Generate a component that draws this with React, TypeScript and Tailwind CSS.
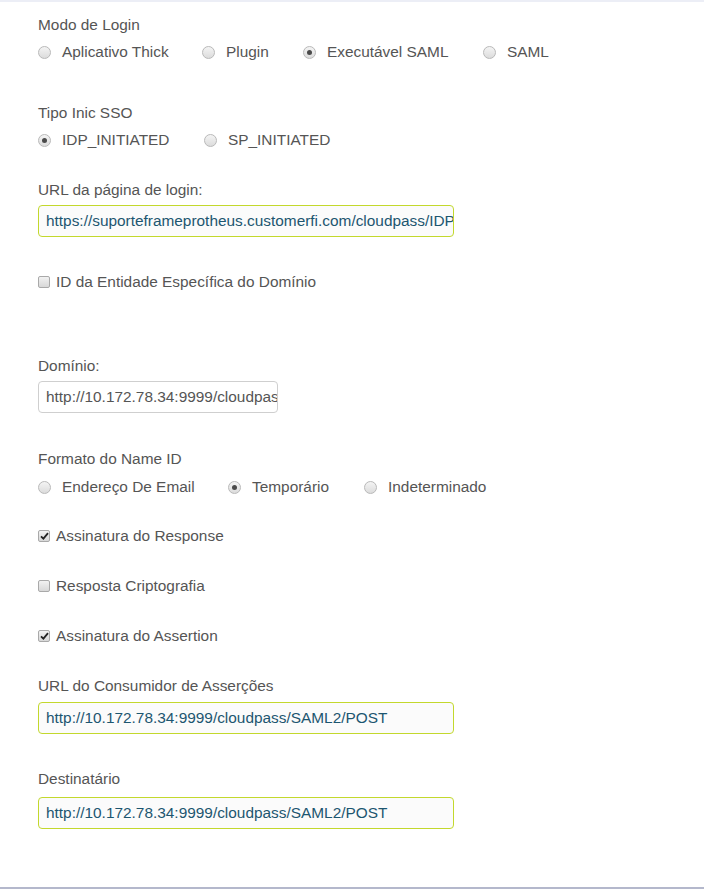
import React from "react";

const font = { fontFamily: '"Liberation Sans", Arial, sans-serif' };

function Radio({ checked }: { checked?: boolean }) {
  return (
    <span className="flex h-[13px] w-[13px] shrink-0 items-center justify-center rounded-full border border-[#b9b9b9] bg-gradient-to-b from-[#f4f4f4] to-[#dcdcdc]">
      {checked && <span className="h-[5px] w-[5px] rounded-full bg-[#4a4a4a]" />}
    </span>
  );
}

function Check({ checked }: { checked?: boolean }) {
  return (
    <span className="flex h-[12px] w-[12px] shrink-0 items-center justify-center rounded-[2px] border border-[#a9a9a9] bg-gradient-to-b from-[#f2f2f2] to-[#d8d8d8]">
      {checked && (
        <svg width="9" height="8" viewBox="0 0 9 8">
          <path d="M1 4.3 L3.4 6.6 L8 1.2" fill="none" stroke="#222" strokeWidth="1.8" />
        </svg>
      )}
    </span>
  );
}

function RadioGroup({ options, widths }: { options: { label: string; checked?: boolean }[]; widths: string[] }) {
  return (
    <div className="flex h-5 items-center">
      {options.map((o, i) => (
        <div key={o.label} className={`flex items-center ${widths[i]}`}>
          <Radio checked={o.checked} />
          <span className="ml-[11px] text-[15.4px] text-[#555]">{o.label}</span>
        </div>
      ))}
    </div>
  );
}

function CheckRow({ label, checked, className }: { label: string; checked?: boolean; className: string }) {
  return (
    <div className={`flex h-5 items-center ${className}`}>
      <Check checked={checked} />
      <span className="ml-[6px] text-[15.4px] text-[#555]">{label}</span>
    </div>
  );
}

function Label({ children, className }: { children: React.ReactNode; className: string }) {
  return <div className={`h-5 text-[15.4px] leading-5 text-[#555] ${className}`}>{children}</div>;
}

function Field({ value, className, active }: { value: string; className: string; active?: boolean }) {
  return (
    <div
      className={`flex h-[32px] items-center overflow-hidden whitespace-nowrap rounded-[4px] border pl-[7px] text-[15.4px] ${
        active ? "border-[#c3d82d] bg-[#fbfbfb] text-[#1d5670]" : "border-[#cfcfcf] bg-white text-[#555]"
      } ${className}`}
    >
      {value}
    </div>
  );
}

export default function App() {
  return (
    <div style={font} className="flex min-h-[889px] w-full flex-col border-t-2 border-b-2 border-t-[#eceef6] border-b-[#b4b8cc] bg-white">
      <div className="flex flex-col pl-[38px]">
        <Label className="mt-[13px]">Modo de Login</Label>
        <div className="mt-[7px]">
          <RadioGroup
            widths={["w-[164px]", "w-[101px]", "w-[180px]", ""]}
            options={[
              { label: "Aplicativo Thick" },
              { label: "Plugin" },
              { label: "Executável SAML", checked: true },
              { label: "SAML" },
            ]}
          />
        </div>

        <Label className="mt-[41px]">Tipo Inic SSO</Label>
        <div className="mt-[7px]">
          <RadioGroup widths={["w-[166px]", ""]} options={[{ label: "IDP_INITIATED", checked: true }, { label: "SP_INITIATED" }]} />
        </div>

        <Label className="mt-[30px]">URL da página de login:</Label>
        <Field
          active
          className="mt-[5px] w-[416px]"
          value="https://suporteframeprotheus.customerfi.com/cloudpass/IDP"
        />

        <CheckRow className="mt-[35px]" label="ID da Entidade Específica do Domínio" />

        <Label className="mt-[64px]">Domínio:</Label>
        <Field className="mt-[5px] w-[240px]" value="http://10.172.78.34:9999/cloudpass" />

        <Label className="mt-[36px]">Formato do Name ID</Label>
        <div className="mt-[8px]">
          <RadioGroup
            widths={["w-[190px]", "w-[136px]", ""]}
            options={[{ label: "Endereço De Email" }, { label: "Temporário", checked: true }, { label: "Indeterminado" }]}
          />
        </div>

        <CheckRow className="mt-[29px]" label="Assinatura do Response" checked />
        <CheckRow className="mt-[30px]" label="Resposta Criptografia" />
        <CheckRow className="mt-[30px]" label="Assinatura do Assertion" checked />

        <Label className="mt-[30px]">URL do Consumidor de Asserções</Label>
        <Field active className="mt-[6px] w-[416px]" value="http://10.172.78.34:9999/cloudpass/SAML2/POST" />

        <Label className="mt-[35px]">Destinatário</Label>
        <Field active className="mt-[8px] w-[416px]" value="http://10.172.78.34:9999/cloudpass/SAML2/POST" />
      </div>
    </div>
  );
}
